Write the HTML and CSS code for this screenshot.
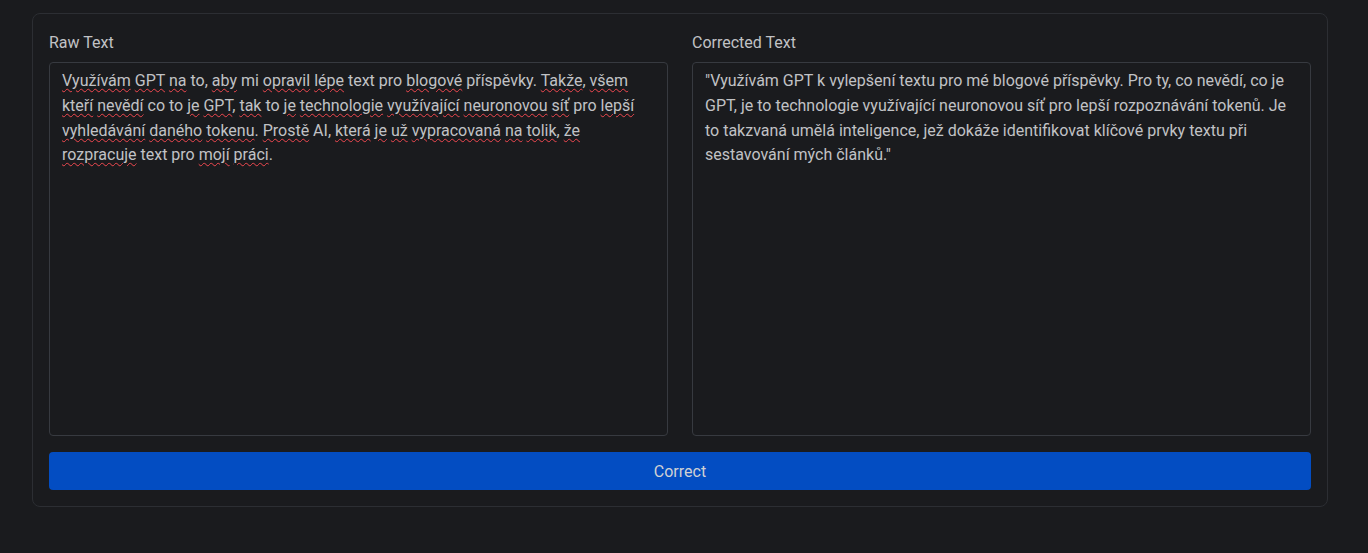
FILE: index.html
```html
<!DOCTYPE html>
<html lang="cs">
<head>
<meta charset="utf-8">
<title>Text corrector</title>
<link rel="stylesheet" href="styles.css">
</head>
<body>
<main class="card">
  <div class="columns">
    <section class="field">
      <label class="label">Raw Text</label>
      <div class="area"><span class="sp">Využívám</span> <span class="sp">GPT</span> <span class="sp">na</span> to, <span class="sp">aby</span> mi <span class="sp">opravil</span> <span class="sp">lépe</span> text pro <span class="sp">blogové</span> příspěvky. <span class="sp">Takže</span>, <span class="sp">všem</span> <span class="sp">kteří</span> <span class="sp">nevědí</span> co to <span class="sp">je</span> <span class="sp">GPT</span>, <span class="sp">tak</span> to <span class="sp">je</span> <span class="sp">technologie</span> <span class="sp">využívající</span> <span class="sp">neuronovou</span> <span class="sp">síť</span> pro <span class="sp">lepší</span> <span class="sp">vyhledávání</span> <span class="sp">daného</span> <span class="sp">tokenu</span>. <span class="sp">Prostě</span> AI, <span class="sp">která</span> <span class="sp">je</span> <span class="sp">už</span> <span class="sp">vypracovaná</span> <span class="sp">na</span> <span class="sp">tolik</span>, <span class="sp">že</span> <span class="sp">rozpracuje</span> text pro <span class="sp">mojí</span> <span class="sp">práci</span>.</div>
    </section>
    <section class="field">
      <label class="label">Corrected Text</label>
      <div class="area">"Využívám GPT k vylepšení textu pro mé blogové příspěvky. Pro ty, co nevědí, co je GPT, je to technologie využívající neuronovou síť pro lepší rozpoznávání tokenů. Je to takzvaná umělá inteligence, jež dokáže identifikovat klíčové prvky textu při sestavování mých článků."</div>
    </section>
  </div>
  <button class="btn">Correct</button>
</main>
</body>
</html>
```
FILE: styles.css
```css
html, body {
  margin: 0;
  background: #1a1b1e;
}
body {
  font-family: Roboto, "Noto Sans", sans-serif;
  color: #c1c2c5;
  padding: 13px 40px 0 32px;
  height: 553px;
  box-sizing: border-box;
}
.card {
  border: 1px solid #2c2e33;
  border-radius: 8px;
  padding: 16px 16px 16px 16px;
  background: #1a1b1e;
}
.columns {
  display: grid;
  grid-template-columns: 1fr 1fr;
  gap: 24px;
}
.field {
  display: flex;
  flex-direction: column;
}
.label {
  font-size: 16px;
  line-height: 24px;
  padding-top: 1px;
  margin-bottom: 7px;
  color: #c1c2c5;
}
.area {
  height: 374px;
  box-sizing: border-box;
  border: 1px solid #373a40;
  border-radius: 4px;
  padding: 6px 12px;
  font-size: 16px;
  line-height: 24.8px;
  color: #c1c2c5;
  background: #1a1b1e;
}
.sp {
  text-decoration: underline wavy #f0484f;
  text-decoration-thickness: 1px;
  text-underline-offset: 2px;
}
.btn {
  display: block;
  width: 100%;
  margin-top: 16px;
  height: 38px;
  border: 0;
  border-radius: 4px;
  background: #034dc2;
  color: #d0d1d4;
  font-family: Roboto, "Noto Sans", sans-serif;
  font-size: 16px;
}
```
